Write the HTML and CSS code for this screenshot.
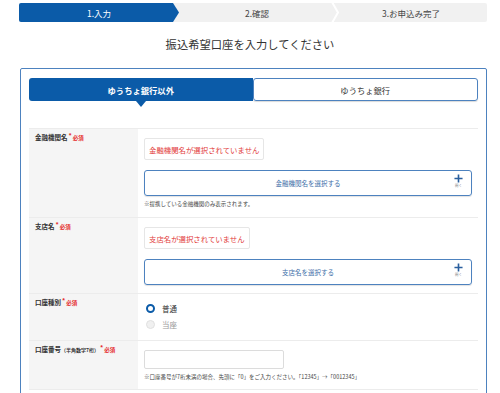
FILE: index.html
```html
<!DOCTYPE html>
<html lang="ja">
<head>
<meta charset="utf-8">
<link rel="stylesheet" href="styles.css">
</head>
<body>
<div class="page">
  <div class="steps">
    <div class="step step-active">1.入力</div>
    <div class="step step-mid">2.確認
      <svg class="sep" viewBox="0 0 8 19" width="8" height="19"><polyline points="1,-1 7,9.5 1,20" fill="none" stroke="#fff" stroke-width="2"/></svg>
    </div>
    <div class="step">3.お申込み完了</div>
  </div>

  <h1 class="title">振込希望口座を入力してください</h1>

  <div class="card">
    <div class="tabs">
      <div class="tab tab-on">ゆうちょ銀行以外</div>
      <div class="tab tab-off">ゆうちょ銀行</div>
    </div>

    <div class="form">
      <div class="row">
        <div class="label">金融機関名<span class="req"><sup>*</sup>必須</span></div>
        <div class="value v1">
          <div class="err">金融機関名が選択されていません</div>
          <div class="pick">金融機関名を選択する
            <span class="open"><svg viewBox="0 0 10 10" width="9" height="9"><path d="M5 0.5V9.5M0.5 5H9.5" stroke="#2a5f9e" stroke-width="1.8"/></svg><span class="open-t">開く</span></span>
          </div>
          <div class="note">※提携している金融機関のみ表示されます。</div>
        </div>
      </div>

      <div class="row">
        <div class="label">支店名<span class="req"><sup>*</sup>必須</span></div>
        <div class="value v2">
          <div class="err">支店名が選択されていません</div>
          <div class="pick">支店名を選択する
            <span class="open"><svg viewBox="0 0 10 10" width="9" height="9"><path d="M5 0.5V9.5M0.5 5H9.5" stroke="#2a5f9e" stroke-width="1.8"/></svg><span class="open-t">開く</span></span>
          </div>
        </div>
      </div>

      <div class="row">
        <div class="label">口座種別<span class="req"><sup>*</sup>必須</span></div>
        <div class="value v3">
          <div class="radio"><span class="dot dot-on"></span>普通</div>
          <div class="radio"><span class="dot dot-off"></span><span class="dim">当座</span></div>
        </div>
      </div>

      <div class="row">
        <div class="label">口座番号<span class="small">（半角数字7桁）</span><span class="req"><sup>*</sup>必須</span></div>
        <div class="value v4">
          <div class="input"></div>
          <div class="note">※口座番号が7桁未満の場合、先頭に「0」をご入力ください。「12345」→「0012345」</div>
        </div>
      </div>
    </div>
  </div>
</div>
</body>
</html>
```

FILE: styles.css
```css
* { box-sizing: border-box; }
html, body { margin: 0; padding: 0; background: #fff; }
body {
  font-family: "Noto Sans CJK JP", "Liberation Sans", sans-serif;
  color: #333;
  overflow: hidden;
}
.page { width: 500px; height: 393px; overflow: hidden; }

.steps {
  display: flex;
  margin: 3px 0 0 19px;
  width: 468px;
  height: 19px;
  background: #f1f1f1;
  border-radius: 2px;
}
.step {
  flex: 1;
  position: relative;
  display: flex;
  align-items: center;
  justify-content: center;
  font-size: 8.5px;
  color: #444;
}
.step-active {
  background: #0b5ba8;
  color: #fff;
  border-radius: 2px 0 0 2px;
  clip-path: polygon(0 0, calc(100% - 6px) 0, 100% 50%, calc(100% - 6px) 100%, 0 100%);
  flex: 0 0 160px;
}
.step-mid { flex: 0 0 156px; }
.sep { position: absolute; right: -4px; top: 0; }

.title {
  margin: 14px 0 16px;
  text-align: center;
  font-size: 11.3px;
  font-weight: normal;
  line-height: 16px;
  color: #333;
}

.card {
  margin-left: 20px;
  width: 467px;
  border: 1.5px solid #4d82bf;
  border-radius: 2px;
  padding: 9px 8px 0 8px;
  height: 400px;
}

.tabs {
  display: flex;
  height: 23px;
  margin-bottom: 27px;
}
.tab {
  flex: 1;
  display: flex;
  align-items: center;
  justify-content: center;
  font-size: 8.3px;
  border-radius: 3px;
}
.tab-on {
  position: relative;
  background: #0b5ba8;
  color: #fff;
  font-weight: bold;
  border-radius: 3px 0 0 3px;
}
.tab-on::after {
  content: "";
  position: absolute;
  left: 50%;
  bottom: -6px;
  margin-left: -5px;
  border-left: 5px solid transparent;
  border-right: 5px solid transparent;
  border-top: 6px solid #0b5ba8;
}
.tab-off {
  border: 1.5px solid #4d82bf;
  color: #333;
  box-shadow: 0 1px 1px rgba(0,0,0,0.15);
}

.form { border-top: 1px solid #ececec; }
.row {
  display: grid;
  grid-template-columns: 109px 1fr;
  border-bottom: 1px solid #ececec;
}
.label {
  background: #f5f5f5;
  padding: 4px 6px;
  font-size: 6.5px;
  line-height: 8px;
  font-weight: bold;
  color: #333;
}
.small { font-size: 5px; }
.req { color: #e52d2d; font-size: 5.5px; font-weight: bold; }
.req sup { font-size: 6.5px; line-height: 0; vertical-align: 2px; margin: 0 1px; }

.value { padding: 9px 6px 8px 6px; }
.v3 { padding: 6px 6px 8px 6px; }

.err {
  display: flex;
  width: fit-content;
  align-items: center;
  height: 22px;
  padding: 0 4px;
  border: 1px solid #e6e6e6;
  border-radius: 2px;
  color: #e23a3a;
  font-size: 7.4px;
}
.pick {
  position: relative;
  margin-top: 10px;
  height: 26px;
  border: 1.5px solid #4d82bf;
  border-radius: 3px;
  display: flex;
  align-items: center;
  justify-content: center;
  font-size: 6.5px;
  color: #3d6ea8;
  box-shadow: 0 1px 1px rgba(0,0,0,0.12);
}
.open {
  position: absolute;
  right: 8px;
  top: 3px;
  display: flex;
  flex-direction: column;
  align-items: center;
  line-height: 0;
}
.open-t { font-size: 3.5px; line-height: 5px; color: #777; }

.note {
  margin-top: 4px;
  font-size: 5.5px;
  line-height: 8px;
  color: #444;
}
.v1 { padding-bottom: 9px; }

.radio {
  display: flex;
  align-items: center;
  height: 16px;
  font-size: 7.5px;
  color: #333;
  padding-left: 2px;
}
.dot {
  width: 9px;
  height: 9px;
  border-radius: 50%;
  margin-right: 7px;
}
.dot-on { border: 2.5px solid #0b5ba8; background: #fff; }
.dot-off { border: 1px solid #e0e0e0; background: #f0f0f0; }
.dim { color: #999; }

.input {
  width: 140px;
  height: 19px;
  border: 1px solid #dcdcdc;
  border-radius: 2px;
}
```
